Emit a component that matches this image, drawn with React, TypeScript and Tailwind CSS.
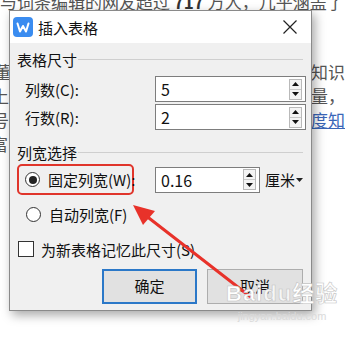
import React from "react";

const F = { fontFamily: '"Noto Sans CJK SC", "Noto Sans", sans-serif' };

function Spinner() {
  return (
    <div className="flex flex-col w-[13px] h-[21px] border border-[#b9b9b9] bg-[#f4f4f4] mr-[3px]">
      <div className="flex-1 flex items-center justify-center border-b border-[#c9c9c9]">
        <svg width="7" height="4" viewBox="0 0 7 4"><path d="M0 4 L3.5 0 L7 4Z" fill="#111" /></svg>
      </div>
      <div className="flex-1 flex items-center justify-center">
        <svg width="7" height="4" viewBox="0 0 7 4"><path d="M0 0 L3.5 4 L7 0Z" fill="#111" /></svg>
      </div>
    </div>
  );
}

function NumInput({ value, w }: { value: string; w: string }) {
  return (
    <div className={`${w} h-[26px] border border-[#7d7d7d] bg-white flex items-center justify-between`}>
      <span className="pl-[5px] text-[16px] text-[#111] leading-none" style={F}>{value}</span>
      <Spinner />
    </div>
  );
}

function GroupLabel({ text }: { text: string }) {
  return (
    <div className="flex items-center h-[20px] pr-[8px]">
      <span className="text-[15px] text-[#111] leading-none" style={F}>{text}</span>
      <div className="flex-1 h-px bg-[#cfcfcf] ml-[1px]" />
    </div>
  );
}

function Radio({ checked }: { checked?: boolean }) {
  return (
    <div className="w-[15px] h-[15px] rounded-full border border-[#333] bg-white flex items-center justify-center">
      {checked && <div className="w-[8px] h-[8px] rounded-full bg-[#222]" />}
    </div>
  );
}

export default function App() {
  return (
    <div className="relative w-[345px] h-[337px] bg-white overflow-hidden" style={F}>
      {/* background article */}
      <div className="text-[17px] text-[#555] leading-[24px]">
        <div className="mt-[-10px] whitespace-nowrap">
          与词条编辑的网友超过 <b className="text-[#333]">717</b> 万人，几乎涵盖了
        </div>
        <div className="h-[46px]" />
        <div className="flex justify-between whitespace-nowrap"><span className="ml-[-6px]">董</span><span>知识</span></div>
        <div className="flex justify-between whitespace-nowrap"><span className="ml-[-8px]">上</span><span className="pr-[0px]">量，</span></div>
        <div className="flex justify-between whitespace-nowrap"><span className="ml-[-8px]">号</span><span className="text-[#3a66b8] underline">度知</span></div>
        <div className="flex justify-between whitespace-nowrap"><span className="ml-[-9px]">富</span><span /></div>
      </div>

      {/* dialog */}
      <div className="absolute left-[9px] top-[10px] w-[303px] h-[301px] border border-[#8a8a8a] bg-[#f0f0f0] shadow-[3px_4px_10px_rgba(0,0,0,0.35)] flex flex-col">
        <div className="h-[32px] bg-white flex items-center">
          <div className="ml-[3px] w-[20px] h-[20px] rounded-[4px] bg-[#3a8cf0] flex items-center justify-center">
            <svg width="14" height="11" viewBox="0 0 14 11">
              <path d="M1.5 1.5 L4 9.5 L7 4 L10 9.5 L12.5 1.5" fill="none" stroke="#fff" strokeWidth="2" strokeLinejoin="round" strokeLinecap="round" />
            </svg>
          </div>
          <span className="ml-[5px] text-[15px] text-[#111] leading-none">插入表格</span>
          <div className="flex-1" />
          <svg className="mr-[14px]" width="14" height="14" viewBox="0 0 14 14">
            <path d="M0.5 0.5 L13.5 13.5 M13.5 0.5 L0.5 13.5" stroke="#222" strokeWidth="1.2" />
          </svg>
        </div>

        <div className="flex flex-col pl-[7px]">
          <div className="mt-[6px]"><GroupLabel text="表格尺寸" /></div>
          <div className="mt-[7px] flex items-center h-[26px]">
            <span className="ml-[8px] w-[130px] text-[15px] text-[#111] leading-none">列数(C):</span>
            <NumInput value="5" w="w-[151px]" />
          </div>
          <div className="mt-[2px] flex items-center h-[26px]">
            <span className="ml-[8px] w-[130px] text-[15px] text-[#111] leading-none">行数(R):</span>
            <NumInput value="2" w="w-[151px]" />
          </div>
          <div className="mt-[12px]"><GroupLabel text="列宽选择" /></div>
          <div className="mt-[2px] flex items-center h-[31px]">
            <div className="w-[117px] h-[31px] border-[2.5px] border-[#e0352b] rounded-[5px] flex items-center">
              <div className="ml-[6px]"><Radio checked /></div>
              <span className="ml-[8px] text-[15px] text-[#111] leading-none whitespace-nowrap">固定列宽(W):</span>
            </div>
            <div className="ml-[21px]"><NumInput value="0.16" w="w-[105px]" /></div>
            <span className="ml-[5px] text-[15px] text-[#111] leading-none">厘米</span>
            <svg className="ml-[1px]" width="7" height="4" viewBox="0 0 7 4"><path d="M0 0 L3.5 4 L7 0Z" fill="#222" /></svg>
          </div>
          <div className="mt-[7px] flex items-center h-[24px]">
            <div className="ml-[9px]"><Radio /></div>
            <span className="ml-[8px] text-[15px] text-[#111] leading-none">自动列宽(F)</span>
          </div>
          <div className="mt-[11px] flex items-center h-[24px]">
            <div className="ml-[1px] w-[16px] h-[16px] border border-[#333] bg-white" />
            <span className="ml-[7px] text-[15px] text-[#111] leading-none">为新表格记忆此尺寸(S)</span>
          </div>
          <div className="mt-[8px] flex justify-end gap-[10px] pr-[8px]">
            <button className="w-[95px] h-[35px] border-2 border-[#2b78c8] bg-[#e1e1e1] text-[15px] text-[#111]">确定</button>
            <button className="w-[96px] h-[35px] border border-[#adadad] bg-[#e1e1e1] text-[15px] text-[#111]">取消</button>
          </div>
        </div>
      </div>

      {/* red arrow annotation */}
      <svg className="absolute left-0 top-0 pointer-events-none" width="345" height="337" viewBox="0 0 345 337">
        <line x1="252" y1="298" x2="145" y2="215" stroke="#e8322a" strokeWidth="3" strokeLinecap="round" />
        <path d="M133 205 L155 211 L143 225 Z" fill="#e8322a" />
      </svg>

      {/* watermark */}
      <div className="absolute left-[226px] top-[283px] flex flex-col items-center pointer-events-none">
        <div className="text-[22px] font-bold leading-none text-white [-webkit-text-stroke:0.6px_#c4c4c4] tracking-[1px]" style={{ fontFamily: '"Liberation Sans", "Noto Sans CJK SC", sans-serif' }}>
          Bai<span className="text-[#f6f6f6]">du</span>经验
        </div>
        <div className="mt-[6px] text-[11px] leading-none text-[#dadada]" style={{ fontFamily: '"Liberation Sans", sans-serif' }}>jingyan.baidu.com</div>
      </div>
    </div>
  );
}
